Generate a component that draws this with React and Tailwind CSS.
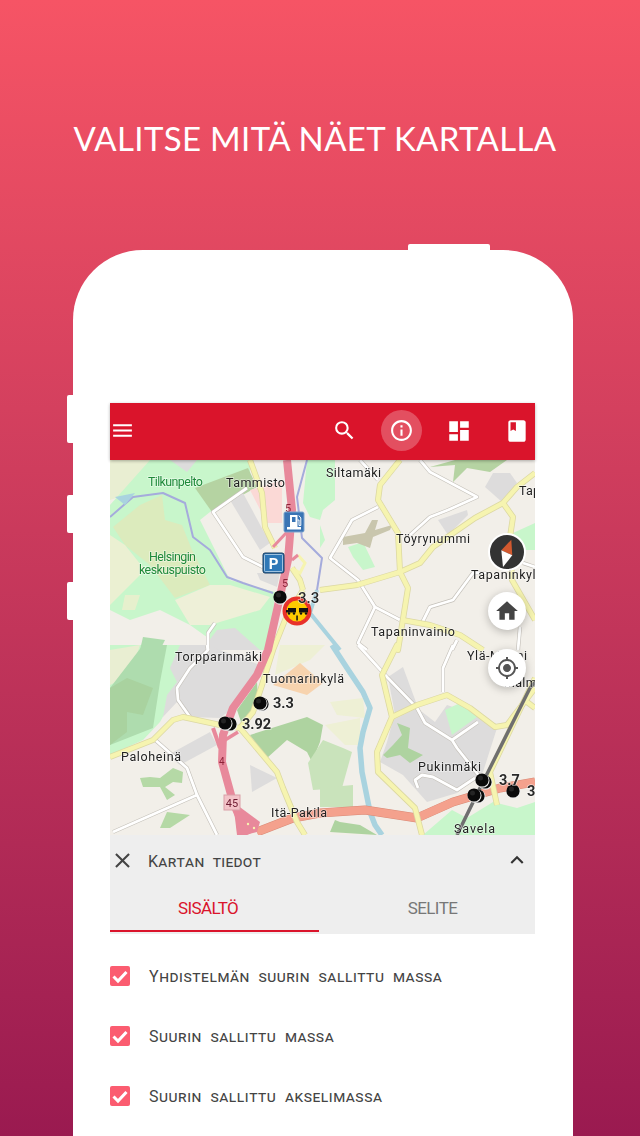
import React from 'react';
import { MdMenu, MdSearch, MdInfoOutline, MdDashboard, MdBook, MdHome, MdMyLocation, MdClose, MdExpandLess } from 'react-icons/md';

const areas = [
    // meadows and parks
    ['0,0 40,0 40,27 0,40', '#e9eed2'],
    ['0,45 40,0 140,0 140,30 100,52 90,60 100,80 120,120 165,132 160,190 115,190 80,165 50,150 20,160 0,150', '#c8f6cb'],
    ['3,67 30,45 52,35 55,60 72,65 82,90 100,125 65,138 40,105 15,85', '#dcebbd'],
    ['0,75 15,85 35,110 0,145', '#ebf0d2'],
    ['65,140 100,125 120,125 160,137 150,150 100,165 80,165', '#eef0d8'],
    ['15,135 30,135 25,150 12,150', '#e6f0cd'],
    ['0,185 75,185 65,235 50,262 33,280 0,295', '#c8f6cb'],
    ['0,190 30,185 20,215 0,225', '#e9eed2'],
    ['33,185 57,185 50,222 43,268 0,285 0,228', '#aedcae'],
    ['0,228 17,218 43,228 33,255 17,252 17,272 0,285', '#a9d29f'],
    ['85,28 138,8 147,27 102,52', '#b5d3a2'],
    ['60,0 87,0 77,12', '#dddcdc'],
    ['33,177 55,180 50,190 30,190', '#aedcae'],
    ['140,30 172,20 172,63 157,63', '#fbd9d6'],
    ['197,0 225,0 225,40 213,50 210,60 200,57 193,43', '#c8f6cb'],
    ['238,87 253,82 265,107 253,110 243,97', '#c8f6cb'],
    ['210,65 215,80 210,88', '#c8f6cb'],
    ['233,77 255,73 262,60 268,60 265,70 282,65 280,70 263,77 260,88 247,83 233,85', '#c9c6ad'],
    ['320,7 345,0 397,0 380,12 357,8 343,22 345,5', '#b5d3a2'],
    ['403,73 425,63 425,90 413,90', '#c8f6cb'],
    ['170,185 215,185 200,200 165,215', '#eef0d5'],
    ['220,242 253,238 255,258 227,255', '#eef0d5'],
    ['215,265 250,258 250,285 235,285', '#eef0d5'],
    ['163,225 190,203 213,223 197,235', '#f7d3ae'],
    // built-up areas
    ['120,40 133,33 160,83 150,90', '#dddcdc'],
    ['147,113 170,113 167,127 150,120', '#dddcdc'],
    ['107,170 125,168 150,190 92,190', '#dddcdc'],
    ['328,60 357,50 358,55 338,75', '#dddcdc'],
    ['375,27 383,13 400,13 407,23 392,42', '#dddcdc'],
    ['60,208 70,185 97,185 150,205 150,215 123,248 110,258 80,257 67,242 53,257 57,235 67,222', '#dddcdc'],
    ['58,295 100,272 107,285 70,305', '#dddcdc'],
    ['140,305 167,318 142,332', '#dddcdc'],
    ['278,217 293,207 307,245 285,255', '#dddcdc'],
    ['283,260 307,248 325,262 337,245 367,255 387,268 373,312 347,333 317,342 293,315 270,302 277,282', '#dddcdc'],
    ['335,250 350,243 367,257 342,275', '#c8f6cb'],
    // woods
    ['127,250 147,222 148,240 133,268', '#a9d29f'],
    ['140,275 197,257 213,265 210,282 202,302 197,292 177,280 157,298', '#aed3a0'],
    ['198,303 213,280 233,288 242,292 232,328 203,330', '#c9e3bb'],
    ['210,328 243,325 243,347 210,347', '#c9e3bb'],
    ['273,295 283,285 292,275 287,263 300,268 298,288 313,295 300,303 290,295 277,298', '#aed3a0'],
    ['30,318 40,317 50,318 63,308 73,312 72,323 63,322 55,327 65,335 57,340 50,327 33,327', '#b5d9a6'],
    ['50,368 57,352 80,355 60,368', '#b5d9a6'],
    ['220,372 225,360 230,362 250,365 267,375', '#aed3a0'],
    ['313,375 342,350 357,358 383,342 407,348 425,342 425,375', '#c8f6cb'],
];

const whiteRoads = [
    '137,28 103,52 133,97 153,107',
    '105,163 98,173 98,190',
    '250,0 268,20',
    '310,0 320,12 367,37 338,50 320,57 300,75',
    '268,47 242,60 220,98 248,120 265,147 290,160',
    '265,147 248,183 257,190',
    '377,113 363,113 343,140 320,147 312,163',
    '413,103 425,107',
    '410,167 408,190',
    '347,180 342,190',
    '97,185 98,190 80,208 67,228 68,240 80,257',
    '43,278 77,308 87,335 107,375',
    '3,372 87,335',
    '248,185 277,217 307,248 315,263 342,280 347,288 370,317',
    '342,280 368,262',
    '308,328 305,320 312,315 323,317 347,330 365,318',
    '333,232 333,208 343,185',
];

const yellowRoads = [
    '140,0 152,33 155,67 165,88',
    '182,108 190,120 193,130',
    '290,0 270,25 268,40 288,73 290,112 298,128 288,190 287,185 272,215 282,257 267,292 268,312 305,348 312,375',
    '210,130 247,125 290,112 310,103 323,87 365,58 393,43 407,27 425,13',
    '393,43 403,57 400,77 402,120 425,160',
    '292,160 320,165 350,175 373,190',
    '193,130 175,160 163,190 152,225 143,252 130,268 167,312 173,328 187,362 195,375',
    '0,297 43,280 63,260 73,257 110,265 130,268',
    '282,257 307,245 337,235 360,248 385,267 397,265 425,228',
    '425,218 380,312 387,345',
    '417,242 425,248',
];

const labels = [
    ['Tammisto', 116, 27, 59, '#222'],
    ['Siltamäki', 216, 17, 55, '#222'],
    ['Töyrynummi', 286, 83, 74, '#222'],
    ['Tapaninkylä', 361, 119, 72, '#222'],
    ['Tapaninvainio', 261, 176, 84, '#222'],
    ['Tap', 409, 35, 21, '#222'],
    ['Torpparinmäki', 65, 201, 87, '#222'],
    ['Tuomarinkylä', 153, 223, 81, '#222'],
    ['Ylä-Malmi', 357, 200, 60, '#222'],
    ['Malmi', 394, 227, 36, '#222'],
    ['Paloheinä', 11, 301, 60, '#222'],
    ['Pukinmäki', 308, 311, 63, '#222'],
    ['Itä-Pakila', 161, 357, 56, '#222'],
    ['Savela', 344, 373, 41, '#222'],
    ['Tilkunpelto', 38, 26, 55, '#1f8a3a'],
    ['Helsingin', 39, 101, 47, '#1f8a3a'],
    ['keskuspuisto', 29, 114, 67, '#1f8a3a'],
];

const pins = [[170, 137], [152, 244], [150, 243], [120, 264], [115, 263], [375, 322], [372, 320], [368, 336], [364, 335], [403, 331]];

const values = [
    ['3.3', 188, 143, 15, 500],
    ['3.3', 163, 248, 14.5, 700],
    ['3.92', 132, 269, 14.5, 700],
    ['3.7', 389, 325, 14.5, 700],
    ['3', 417, 336, 14.5, 700],
];

const options = ['Yhdistelmän suurin sallittu massa', 'Suurin sallittu massa', 'Suurin sallittu akselimassa'];

const MapDrawing = () => (
    <svg viewBox="0 0 425 375" className="block w-[425px] h-[375px] blur-[0.4px]">
        <rect width="425" height="375" fill="#f2efe9" />
        {areas.map(([p, c]) => (
            <polygon key={p} points={p} fill={c} />
        ))}
        {/* water */}
        <polyline points="207,130 200,153 230,190" fill="none" stroke="#a9d3df" strokeWidth="4" />
        <polyline points="222,185 237,208 253,232 260,248 253,272 250,288 252,312 260,352 265,365 272,375" fill="none" stroke="#a9d3df" strokeWidth="5.500" strokeLinejoin="round" />
        <polyline points="0,57 23,37 53,33 75,43 83,77 100,90 117,117 133,123 163,133" fill="none" stroke="#a5abdc" strokeWidth="2" strokeLinejoin="round" />
        <polyline points="197,0 187,37 192,78 212,98 207,130" fill="none" stroke="#a5abdc" strokeWidth="2" strokeLinejoin="round" />
        <polygon points="5,37 25,33 15,45" fill="#a9d3df" />
        {/* roads */}
        {whiteRoads.map((r) => (
            <polyline key={r} points={r} fill="none" stroke="#c4c0b9" strokeWidth="4" strokeLinejoin="round" />
        ))}
        {whiteRoads.map((r) => (
            <polyline key={r} points={r} fill="none" stroke="#fff" strokeWidth="2.800" strokeLinejoin="round" />
        ))}
        <polyline points="147,372 183,358 210,353 255,350 307,358 343,342 390,328 425,322" fill="none" stroke="#d98a76" strokeWidth="9" strokeLinejoin="round" />
        <polyline points="147,372 183,358 210,353 255,350 307,358 343,342 390,328 425,322" fill="none" stroke="#f4a18d" strokeWidth="8" strokeLinejoin="round" />
        {yellowRoads.map((r) => (
            <polyline key={r} points={r} fill="none" stroke="#dcd8a2" strokeWidth="6" strokeLinejoin="round" />
        ))}
        {yellowRoads.map((r) => (
            <polyline key={r} points={r} fill="none" stroke="#f6f4b0" strokeWidth="4.500" strokeLinejoin="round" />
        ))}
        <polyline points="182,108 190,113 195,103 188,95" fill="none" stroke="#f6f4b0" strokeWidth="3" />
        <polyline points="347,375 370,328 420,228 425,222" fill="none" stroke="#6f6f6f" strokeWidth="3.500" />
        <polyline points="177,0 182,50 178,100 167,150 158,190 147,215 123,248 113,275 112,302 123,342 137,375" fill="none" stroke="#e8899b" strokeWidth="8" strokeLinejoin="round" />
        <polyline points="103,268 110,288" fill="none" stroke="#e8899b" strokeWidth="4" />
        <polyline points="128,272 115,280" fill="none" stroke="#e8899b" strokeWidth="3.500" />
        <polyline points="163,87 177,72" fill="none" stroke="#e8899b" strokeWidth="3" />
        <polyline points="182,100 188,95" fill="none" stroke="#e8899b" strokeWidth="3" />
        <polygon points="123,342 150,362 147,372 135,375 127,375" fill="#e8899b" />
        <circle cx="138" cy="364" r="1.200" fill="#f6f4b0" />
        <circle cx="144" cy="368" r="1.200" fill="#f6f4b0" />
        <text x="175" y="52" fontSize="11" fill="#8e2338" fontFamily="Roboto, sans-serif">5</text>
        <text x="172" y="127" fontSize="11" fill="#8e2338" fontFamily="Roboto, sans-serif">5</text>
        <text x="109" y="305" fontSize="10" fill="#8e2338" fontFamily="Roboto, sans-serif">4</text>
        <rect x="114" y="335" width="16" height="15" fill="#f3c3c8" stroke="#d9a0a8" />
        <text x="122" y="347" fontSize="11" textAnchor="middle" fill="#6d1a30" fontFamily="Roboto, sans-serif">45</text>
        {/* place names */}
        {labels.map(([t, x, y, w, c]) => (
            <text key={t} x={x} y={y} fontSize="12.500" textLength={w} lengthAdjust="spacing" fill={c} stroke="#fff" strokeOpacity="0.5" strokeWidth="1.500" paintOrder="stroke" fontFamily="Roboto, sans-serif">{t}</text>
        ))}
        {/* pins */}
        {pins.map(([x, y], i) => (
            <g key={i}>
                <circle cx={x + 0.5} cy={y + 0.7} r="7" fill="#eee" />
                <circle cx={x} cy={y} r="6.600" fill="#0a0a0a" />
                <circle cx={x - 1.5} cy={y - 2} r="2.500" fill="#242424" />
            </g>
        ))}
        {/* fuel sign */}
        <rect x="174" y="52" width="20" height="20" rx="1.500" fill="#3a74b4" stroke="#7fa5cf" />
        <path d="M180 67V55h7.500v12zM182 57v5h3.500v-5zM177 67h14v2.500h-14z" fill="#fff" fillRule="evenodd" />
        <path d="M187.500 60h1.500v5.500h1.800V58l-2-2.500" fill="none" stroke="#fff" strokeWidth="1" />
        {/* parking sign */}
        <rect x="153" y="93" width="21" height="20" rx="2" fill="#2f78b7" stroke="#16395c" />
        <rect x="154.500" y="94.500" width="18" height="17" rx="1" fill="none" stroke="#cfe2f2" strokeWidth="0.700" />
        <text x="163.500" y="109" fontSize="15" fontWeight="700" textAnchor="middle" fill="#fff" fontFamily="Roboto, sans-serif">P</text>
        {/* weight limit sign */}
        <circle cx="187" cy="151" r="12.500" fill="#fecb00" stroke="#e8312a" strokeWidth="4" />
        <rect x="178" y="148" width="8" height="4.500" fill="#111" />
        <rect x="176" y="150" width="3" height="2.500" fill="#111" />
        <rect x="189" y="148" width="9" height="4.500" fill="#111" />
        <circle cx="179" cy="153.500" r="1.200" fill="#111" />
        <circle cx="184" cy="153.500" r="1.200" fill="#111" />
        <circle cx="191" cy="153.500" r="1.200" fill="#111" />
        <circle cx="196" cy="153.500" r="1.200" fill="#111" />
        <rect x="186.300" y="155.500" width="1.500" height="5" fill="#111" />
        {values.map(([t, x, y, s, w], i) => (
            <text key={i} x={x} y={y} fontSize={s} fontWeight={w} fill="#2a2a2a" stroke="#fff" strokeOpacity="0.6" strokeWidth="1.500" paintOrder="stroke" fontFamily="Roboto, sans-serif">{t}</text>
        ))}
    </svg>
);

const MapButton = ({ className, children }) => (
    <div className={`absolute left-[378px] w-[38px] h-[38px] rounded-full bg-white flex items-center justify-center shadow-[0_2px_8px_rgba(0,0,0,0.25)] ${className}`}>
        {children}
    </div>
);

const App = () => {
    return (
        <div className="relative w-[640px] h-[1136px] overflow-hidden bg-gradient-to-b from-[#f65465] to-[#9a1a50]">
            <h1 className="pt-[117px] pr-[10px] text-center text-white text-[33px] leading-[42px] font-['Lato',sans-serif] tracking-[0.35px]">VALITSE MITÄ NÄET KARTALLA</h1>

            <div className="relative ml-[73px] mt-[91px] w-[500px] h-[900px] rounded-t-[70px] bg-white pt-[153px] pl-[37px]">
                <div className="absolute -top-[6px] left-[335px] w-[82px] h-[6px] rounded-t-[2px] bg-white"></div>
                <div className="absolute -left-[6px] top-[145px] w-[6px] h-[48px] rounded-l-[2px] bg-white"></div>
                <div className="absolute -left-[6px] top-[245px] w-[6px] h-[38px] rounded-l-[2px] bg-white"></div>
                <div className="absolute -left-[6px] top-[332px] w-[6px] h-[38px] rounded-l-[2px] bg-white"></div>

                <div className="w-[425px]">
                    <div className="relative z-10 h-[57px] pb-[2px] bg-[#da142b] flex items-center text-white shadow-[0_1px_3px_rgba(0,0,0,0.3)]">
                        <MdMenu size={25} />
                        <div className="ml-auto pr-[0.5px] flex items-center gap-[21.500px]">
                            <div className="w-[36px] flex justify-center"><MdSearch size={25} /></div>
                            <div className="relative w-[36px] flex justify-center">
                                <div className="absolute -top-[8px] left-[-2.500px] w-[41px] h-[41px] rounded-full bg-white/25"></div>
                                <MdInfoOutline size={25} className="relative" />
                            </div>
                            <div className="w-[36px] flex justify-center"><MdDashboard size={26} /></div>
                            <div className="w-[36px] flex justify-center"><MdBook size={26} /></div>
                        </div>
                    </div>

                    <div className="relative h-[375px] overflow-hidden">
                        <MapDrawing />
                        <div className="absolute left-[378px] top-[73px] w-[38px] h-[38px] rounded-full bg-[#333] border-2 border-white flex items-center justify-center">
                            <svg width="34" height="34" viewBox="0 0 34 34">
                                <polygon points="21.300,4.700 11.300,15.300 22.300,20.300" fill="#d2592f" />
                                <polygon points="11.300,15.300 22.300,20.300 13,32" fill="#fff" />
                            </svg>
                        </div>
                        <MapButton className="top-[132px]"><MdHome size={26} className="text-[#444]" /></MapButton>
                        <MapButton className="top-[189px]"><MdMyLocation size={24} className="text-[#555]" /></MapButton>
                    </div>

                    <div className="h-[99px] bg-[#eeeeee]">
                        <div className="h-[50px] flex items-center">
                            <MdClose size={25} className="text-[#444]" />
                            <span className="ml-[13px] pt-[3px] text-[16px] text-[#444] font-['Roboto',sans-serif] [font-variant:small-caps] tracking-[0.3px] [word-spacing:4px]">Kartan tiedot</span>
                            <MdExpandLess size={26} className="ml-auto mr-[5px] text-[#333]" />
                        </div>
                        <div className="h-[49px] flex text-[17px] leading-[47px] tracking-[-0.6px] font-['Roboto',sans-serif]">
                            <div className="w-[209px] h-[47px] pr-[13px] text-center text-[#da142b] border-b-2 border-[#da142b]">SISÄLTÖ</div>
                            <div className="flex-1 pl-[11px] text-center text-[#777]">SELITE</div>
                        </div>
                    </div>

                    <div className="pt-[12px]">
                        {options.map((o) => (
                            <div key={o} className="h-[60px] flex items-center gap-[19px]">
                                <div className="w-[20px] h-[20px] rounded-[2px] bg-[#fb5c70] flex items-center justify-center">
                                    <svg width="20" height="20" viewBox="0 0 20 20">
                                        <polyline points="3.500,10.500 8,15 16.500,6" fill="none" stroke="#fff" strokeWidth="3" />
                                    </svg>
                                </div>
                                <span className="pt-[2px] text-[16px] text-[#444] font-['Roboto',sans-serif] [font-variant:small-caps] tracking-[0.55px] [word-spacing:4px]">{o}</span>
                            </div>
                        ))}
                    </div>
                </div>
            </div>
        </div>
    );
};

export default App;
